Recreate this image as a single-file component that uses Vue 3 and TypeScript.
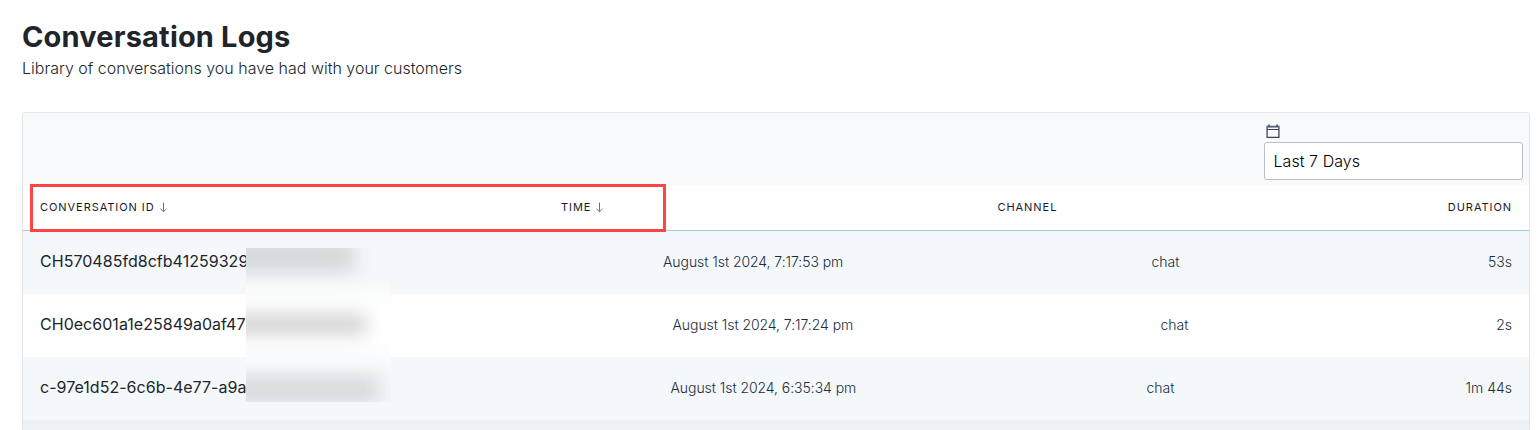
<script setup lang="ts">
interface LogRow {
  id: string
  time: string
  channel: string
  duration: string
}

const rows: LogRow[] = [
  { id: 'CH570485fd8cfb41259329', time: 'August 1st 2024, 7:17:53 pm', channel: 'chat', duration: '53s' },
  { id: 'CH0ec601a1e25849a0af47', time: 'August 1st 2024, 7:17:24 pm', channel: 'chat', duration: '2s' },
  { id: 'c-97e1d52-6c6b-4e77-a9a', time: 'August 1st 2024, 6:35:34 pm', channel: 'chat', duration: '1m 44s' },
]
</script>

<template>
  <main class="page">
    <h1>Conversation Logs</h1>
    <p class="subtitle">Library of conversations you have had with your customers</p>

    <section class="panel">
      <div class="toolbar">
        <div class="filter">
          <svg class="calendar" width="14" height="15" viewBox="0 0 14 15" fill="none" stroke="#3c4659">
            <path d="M1.1 2.5H12.9V13.4H1.1Z" stroke-width="1.3" />
            <path d="M1 3H13" stroke="#7b8390" stroke-width="1.2" />
            <path d="M1 5.5H13" stroke-width="1" />
            <path d="M3 0.5V2.5M11 0.5V2.5" stroke-width="1.5" />
          </svg>
          <div class="select">Last 7 Days</div>
        </div>
      </div>

      <div class="line head">
        <div>CONVERSATION ID
          <svg class="arrow" width="8" height="11" viewBox="0 0 8 11" fill="none" stroke="#687181"><path d="M4.5 0.5V9.5M1.5 6.8L4.5 9.7L7.5 6.8" /></svg>
        </div>
        <div>TIME
          <svg class="arrow" width="8" height="11" viewBox="0 0 8 11" fill="none" stroke="#687181"><path d="M4.5 0.5V9.5M1.5 6.8L4.5 9.7L7.5 6.8" /></svg>
        </div>
        <div>CHANNEL</div>
        <div class="end">DURATION</div>
      </div>

      <div class="rows">
        <div v-for="row in rows" :key="row.id" class="line row">
          <div class="id"><span>{{ row.id }}</span></div>
          <div class="time">{{ row.time }}</div>
          <div>{{ row.channel }}</div>
          <div class="end">{{ row.duration }}</div>
        </div>
      </div>
      <div class="footer"></div>

      <div class="redaction">
        <i class="smudge first"></i>
        <i class="smudge second"></i>
        <i class="smudge third"></i>
      </div>
      <div class="highlight"></div>
    </section>
  </main>
</template>

<style>
body { background: #fff; }
</style>

<style scoped>
.page {
  box-sizing: border-box;
  width: 1540px;
  height: 430px;
  padding: 18px 10px 0 22px;
  overflow: hidden;
  font-family: Inter, "Liberation Sans", sans-serif;
  color: #212529;
}
h1 {
  margin: 0;
  font-size: 29px;
  line-height: 38px;
  font-weight: 700;
  letter-spacing: 0.16px;
  white-space: nowrap;
}
.subtitle {
  margin: 0;
  font-size: 16px;
  line-height: 24px;
  font-weight: 300;
}
.panel {
  position: relative;
  box-sizing: border-box;
  width: 1508px;
  height: 340px;
  margin-top: 32px;
  border: 1px solid #e1e4e9;
  border-radius: 4px;
}
.toolbar {
  box-sizing: border-box;
  display: flex;
  justify-content: flex-end;
  height: 73px;
  padding: 11px 6px 0 0;
  background: #f8f9fb;
  border-radius: 4px;
}
.filter { width: 259px; }
.calendar { display: block; margin: 0 0 3px 2px; }
.select {
  box-sizing: border-box;
  height: 38px;
  padding-left: 8.5px;
  border: 1px solid #b9bdc5;
  border-radius: 3px;
  background: #fff;
  color: #000;
  font-size: 16px;
  line-height: 36px;
  font-weight: 300;
  letter-spacing: 0.05px;
}
.line {
  display: grid;
  padding: 0 17px;
  white-space: nowrap;
}
.head {
  grid-template-columns: 521px 436.5px 1fr auto;
  height: 44px;
  border-bottom: 1px solid #a5c8dc;
  font-size: 11px;
  line-height: 43px;
  letter-spacing: 0.94px;
  color: #151b28;
}
.arrow { margin-left: 0; vertical-align: -2px; }
.row {
  height: 63px;
  line-height: 61px;
  font-size: 14px;
  font-weight: 300;
  color: #202c3a;
}
.row:nth-child(odd) { background: #f4f8fb; }
.row:nth-child(1) { grid-template-columns: 623px 488.5px 1fr auto; }
.row:nth-child(2) { grid-template-columns: 632.5px 488px 1fr auto; }
.row:nth-child(3) { grid-template-columns: 630.5px 476px 1fr auto; }
.id {
  font-size: 16px;
  letter-spacing: 0.03px;
  font-weight: 400;
  color: #212529;
}
.time { letter-spacing: -0.06px; }
.end { text-align: right; }
.footer { height: 34px; background: #edf1f5; }
.redaction {
  position: absolute;
  left: 223px;
  top: 135px;
  width: 145px;
  height: 154px;
  overflow: hidden;
  background: linear-gradient(#f4f8fb 0, #f4f8fb 28px, #fbfcfd 46px, #fff 66px, #fff 88px, #fafbfc 110px, #f4f8fb 129px);
}
.smudge {
  position: absolute;
  left: -20px;
  height: 18px;
  background: #d3d3d3;
  filter: blur(9px);
}
.first { top: -8px; width: 129px; height: 32px; background: #d5d8da; }
.second { top: 67px; width: 140px; height: 19px; background: #d0d0d0; }
.third { top: 128px; width: 153px; height: 28px; background: #d7dadc; }
.highlight {
  position: absolute;
  box-sizing: border-box;
  left: 7px;
  top: 71px;
  width: 636px;
  height: 48px;
  border: 3px solid #fc4444;
}
</style>
